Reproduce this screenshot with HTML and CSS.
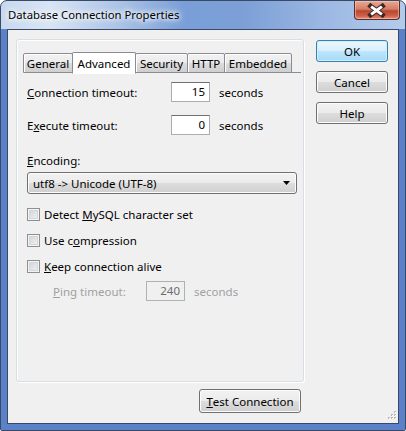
FILE: index.html
```html
<!DOCTYPE html>
<html>
<head>
<meta charset="utf-8">
<link rel="stylesheet" href="styles.css">
</head>
<body>
<div class="window">
  <div class="titlebar">
    <span class="title">Database Connection Properties</span>
    <div class="close">
      <svg width="46" height="19" viewBox="0 0 46 19">
        <path d="M17 5 L29 14 M29 5 L17 14" stroke="#3b2a2a" stroke-width="5" stroke-linecap="square"/>
        <path d="M17.5 5.5 L28.5 13.5 M28.5 5.5 L17.5 13.5" stroke="#ffffff" stroke-width="3"/>
      </svg>
    </div>
  </div>
  <div class="client">
    <div class="main">
      <div class="panel">
        <div class="tabs">
          <div class="tab t-general">General</div>
          <div class="tab active t-advanced">Advanced</div>
          <div class="tab t-security">Security</div>
          <div class="tab t-http">HTTP</div>
          <div class="tab t-embedded">Embedded</div>
          <div class="tab-fill"></div>
        </div>
        <div class="page">
          <div class="row">
            <span class="label"><u>C</u>onnection timeout:</span>
            <span class="num">15</span>
            <span class="unit">seconds</span>
          </div>
          <div class="row">
            <span class="label">E<u>x</u>ecute timeout:</span>
            <span class="num">0</span>
            <span class="unit">seconds</span>
          </div>
          <div class="enc-label"><u>E</u>ncoding:</div>
          <div class="combo">
            <span>utf8 -&gt; Unicode (UTF-8)</span>
            <svg width="8" height="4" viewBox="0 0 8 4"><path d="M0 0 H7 L3.5 4 Z" fill="#000"/></svg>
          </div>
          <div class="check first"><span class="box"></span><span>Detect <u>M</u>ySQL character set</span></div>
          <div class="check"><span class="box"></span><span>Use c<u>o</u>mpression</span></div>
          <div class="check"><span class="box"></span><span><u>K</u>eep connection alive</span></div>
          <div class="row disabled">
            <span class="label ping"><u>P</u>ing timeout:</span>
            <span class="num">240</span>
            <span class="unit">seconds</span>
          </div>
        </div>
      </div>
      <div class="bottom">
        <div class="btn test"><u>T</u>est Connection</div>
      </div>
    </div>
    <div class="side">
      <div class="btn default">OK</div>
      <div class="btn">Cancel</div>
      <div class="btn">Help</div>
    </div>
    <div class="grip">
      <svg width="11" height="11" viewBox="0 0 11 11">
        <g fill="#b8b8b8">
          <rect x="8" y="0" width="2" height="2"/>
          <rect x="5" y="3" width="2" height="2"/><rect x="8" y="3" width="2" height="2"/>
          <rect x="2" y="6" width="2" height="2"/><rect x="5" y="6" width="2" height="2"/><rect x="8" y="6" width="2" height="2"/>
        </g>
        <g fill="#ffffff">
          <rect x="9" y="1" width="1" height="1"/>
          <rect x="6" y="4" width="1" height="1"/><rect x="9" y="4" width="1" height="1"/>
          <rect x="3" y="7" width="1" height="1"/><rect x="6" y="7" width="1" height="1"/><rect x="9" y="7" width="1" height="1"/>
        </g>
      </svg>
    </div>
  </div>
</div>
</body>
</html>
```
FILE: styles.css
```css
* { box-sizing: border-box; }
html, body { margin: 0; padding: 0; background: #ffffff; }
body {
  font-family: "Segoe UI", "Noto Sans", "Open Sans", sans-serif;
  font-size: 11.5px;
  color: #000;
}
.window {
  width: 406px;
  height: 431px;
  border: 1px solid #3a4a66;
  border-radius: 7px 7px 2px 2px;
  background: linear-gradient(90deg, #c7d8ef 0%, #d9e5f4 12%, #a9c2e6 30%, #7a9fd8 45%, #7c9fd6 60%, #9cb8e3 80%, #b4cbeb 100%);
  padding: 0 6px 6px 6px;
  display: flex;
  flex-direction: column;
  position: relative;
}
.window::after {
  content: "";
  position: absolute;
  left: 0; right: 0; bottom: 0; top: 28px;
  border-left: 6px solid #5b82c9;
  border-right: 6px solid #5b82c9;
  border-bottom: 6px solid #5b82c9;
  pointer-events: none;
}
.titlebar {
  height: 28px;
  display: flex;
  align-items: flex-start;
  justify-content: space-between;
  position: relative;
}
.title {
  margin-top: 6px;
  padding-left: 1px;
  font-size: 11.3px;
  color: #000;
  text-shadow: 0 0 8px #fff, 0 0 6px #fff, 0 0 4px #fff;
}
.close {
  width: 46px;
  height: 19px;
  margin-right: -1px;
  border: 1px solid #5d2b2b;
  border-top: none;
  border-radius: 0 0 4px 4px;
  background: linear-gradient(180deg, #eaa894 0%, #d57d65 45%, #bb4630 55%, #c95f48 80%, #e29077 100%);
  box-shadow: inset 0 0 0 1px rgba(255, 210, 200, 0.5);
  display: flex;
  align-items: center;
  justify-content: center;
  overflow: hidden;
  position: relative;
  z-index: 2;
}
.close svg { display: block; margin-left: -1px; }
.client {
  flex: 1;
  border: 1px solid #3a4a66;
  background: #f0f0f0;
  display: flex;
  padding: 9px 10px 8px 8px;
  gap: 12px;
  position: relative;
  z-index: 1;
}
.main {
  display: flex;
  flex-direction: column;
  width: 288px;
}
.panel {
  height: 343px;
  border: 1px solid #d5dfe5;
  border-radius: 3px;
  box-shadow: inset 1px 1px 0 #fff, 1px 1px 0 #fff;
  padding: 11px 2px 0 6px;
}
.tabs {
  display: flex;
  align-items: flex-end;
  height: 22px;
}
.tab {
  height: 20px;
  border: 1px solid #898c95;
  margin-right: -1px;
  border-radius: 2px 2px 0 0;
  background: linear-gradient(180deg, #f2f2f2 0%, #ebebeb 50%, #dddddd 51%, #cfcfcf 100%);
  line-height: 18px;
  padding-top: 1px;
  text-align: center;
  position: relative;
  box-shadow: inset 1px 1px 0 #fff;
  flex: none;
}
.t-general { width: 50px; }
.t-advanced { width: 64px; }
.t-security { width: 53px; }
.t-http { width: 38px; }
.t-embedded { width: 68px; }
.tab.active {
  height: 22px;
  background: #ffffff;
  z-index: 2;
  line-height: 20px;
  padding-top: 1px;
  box-shadow: none;
  border-bottom: 1px solid #fff;
  margin-bottom: -1px;
}
.tab-fill {
  flex: 1;
  border-bottom: 1px solid #898c95;
  height: 1px;
}
.page {
  padding: 9px 0 0 4px;
  display: flex;
  flex-direction: column;
}
.row {
  display: flex;
  align-items: center;
  height: 20px;
}
.row + .row { margin-top: 13px; }
.label { width: 144px; }
.num {
  width: 39px;
  height: 20px;
  border: 1px solid #abadb3;
  border-top-color: #707070;
  background: #fff;
  text-align: right;
  padding-right: 4px;
  line-height: 18px;
}
.unit { margin-left: 9px; }
.enc-label { margin-top: 18px; height: 16px; line-height: 16px; }
.combo {
  margin-top: 3px;
  width: 270px;
  height: 22px;
  border: 1px solid #707070;
  border-radius: 3px;
  background: linear-gradient(180deg, #f2f2f2 0%, #ebebeb 50%, #dddddd 51%, #cfcfcf 100%);
  box-shadow: inset 0 0 0 1px #fcfcfc;
  display: flex;
  align-items: center;
  justify-content: space-between;
  padding: 0 5px 0 5px;
}
.combo svg { display: block; }
.check {
  display: flex;
  align-items: center;
  height: 16px;
  margin-top: 10px;
}
.check.first { margin-top: 12px; }
.box {
  width: 13px;
  height: 13px;
  border: 1px solid #8e8f8f;
  background: linear-gradient(135deg, #cbcfd5 0%, #f6f6f6 100%);
  box-shadow: inset 0 0 0 1px #f4f4f4, inset 0 0 0 2px #d3d6da;
  margin-right: 4px;
}
.row.disabled { margin-top: 7px; color: #a0a0a0; }
.label.ping { padding-left: 26px; width: 119px; }
.row.disabled .num {
  border-color: #adb2b5;
  background: #f0f0f0;
  color: #6d6d6d;
}
.bottom {
  display: flex;
  justify-content: flex-end;
  margin-top: 7px;
  padding-right: 3px;
}
.btn {
  height: 23px;
  border: 1px solid #707070;
  border-radius: 3px;
  background: linear-gradient(180deg, #f2f2f2 0%, #ebebeb 50%, #dddddd 51%, #cfcfcf 100%);
  box-shadow: inset 0 0 0 1px #fcfcfc;
  display: flex;
  align-items: center;
  justify-content: center;
}
.btn.test { width: 102px; height: 24px; }
.side {
  display: flex;
  flex-direction: column;
  gap: 9px;
  width: 72px;
  padding-top: 1px;
}
.side .btn { height: 22px; }
.btn.default {
  border-color: #3c7fb1;
  background: linear-gradient(180deg, #eaf6fd 0%, #d9f0fc 50%, #bee6fd 51%, #a7d9f5 100%);
  box-shadow: inset 0 0 0 1px #c9f1ff;
}
.grip {
  position: absolute;
  right: 1px;
  bottom: 1px;
}
.grip svg { display: block; }
```
